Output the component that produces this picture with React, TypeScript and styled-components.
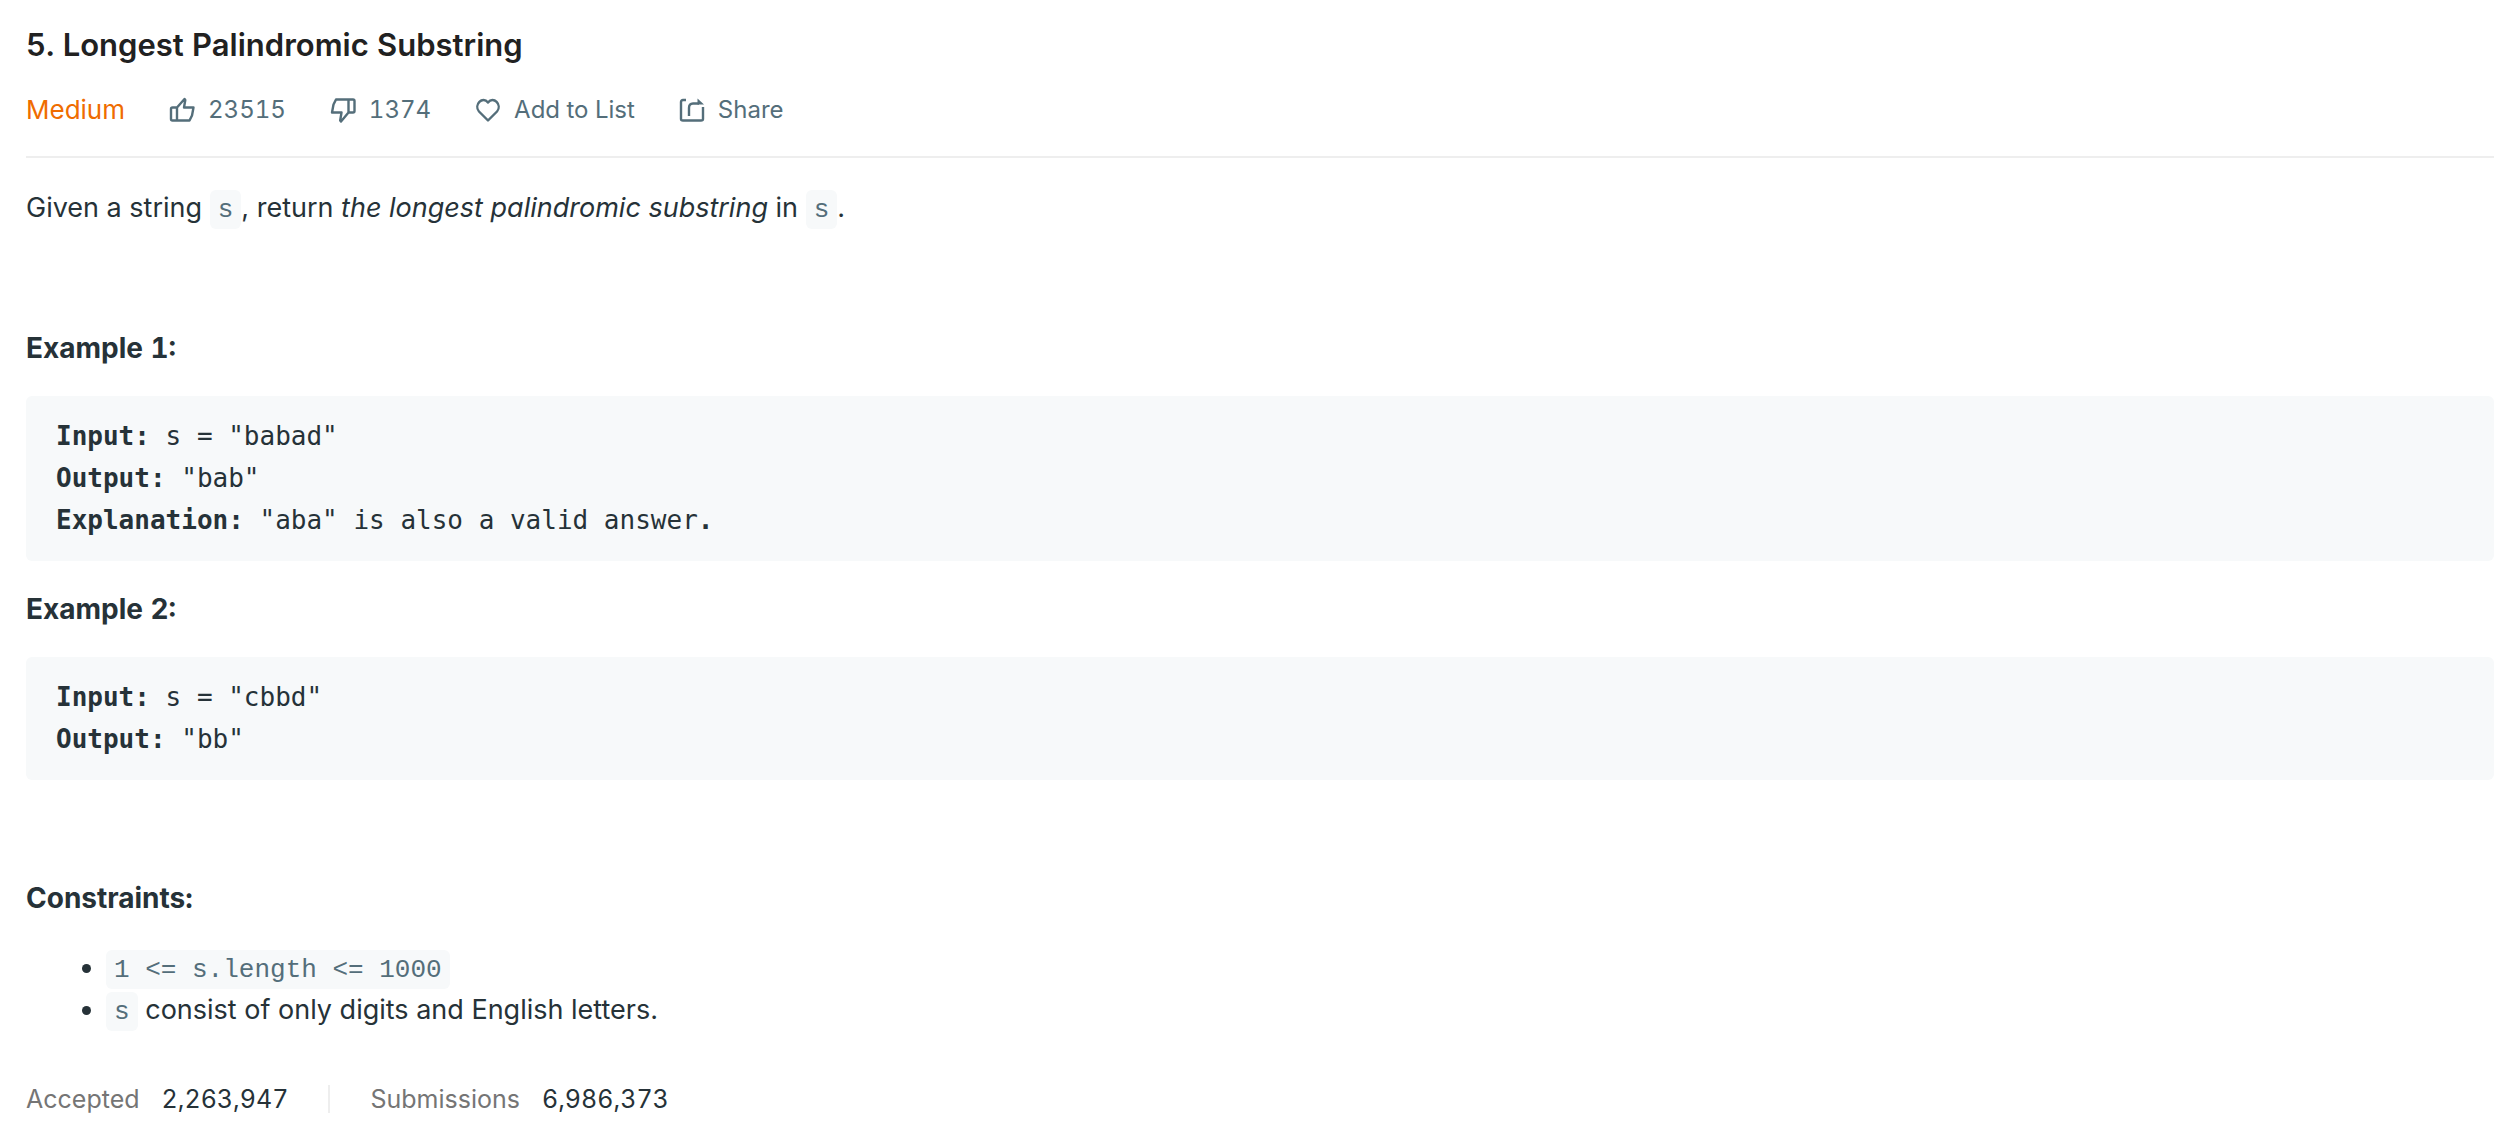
import React from "react";
import styled, { createGlobalStyle } from "styled-components";

const GlobalStyle = createGlobalStyle`
  * { box-sizing: border-box; }
  body {
    margin: 0;
    background: #fff;
    color: #263238;
    font-family: Inter, "Liberation Sans", sans-serif;
    font-size: 27px;
    line-height: 42px;
  }
`;

const Page = styled.main`
  padding: 21px 18px 20px 26px;
`;

const Header = styled.header`
  display: flex;
  flex-direction: column;
  gap: 20px;
  padding-bottom: 25px;
  border-bottom: 2px solid #eee;
`;

const Title = styled.h1`
  margin: 0;
  color: #212121;
  font-size: 31px;
  font-weight: 600;
  font-variant-numeric: tabular-nums;
  line-height: 48px;
`;

const Toolbar = styled.div`
  display: flex;
  align-items: center;
  gap: 44px;
  font-size: 24px;
  line-height: 42px;
`;

const Difficulty = styled.span`
  color: #ef6c00;
  font-size: 26px;
`;

const Action = styled.button`
  display: flex;
  align-items: center;
  gap: 13px;
  padding: 0;
  border: 0;
  background: none;
  color: #546e7a;
  font: inherit;
  font-variant-numeric: tabular-nums;
  cursor: pointer;
`;

const Icon = styled.svg`
  display: block;
  width: 26px;
  height: 26px;
  fill: none;
  stroke: currentColor;
  stroke-width: 2.4;
  stroke-linejoin: round;
`;

const Content = styled.article`
  padding-top: 29px;
`;

const Paragraph = styled.p<{ $spaced?: boolean }>`
  margin: 0 0 ${(p) => (p.$spaced ? 98 : 28)}px;
`;

const Heading = styled.h2`
  margin: 0;
  font-size: 28px;
  font-weight: 700;
  font-variant-numeric: tabular-nums;
`;

const Code = styled.code`
  padding: 5px 8px 4px;
  border-radius: 6px;
  background: #f7f9fa;
  color: #546e7a;
  font-family: "Liberation Mono", monospace;
  font-size: 26px;
  line-height: 1;
`;

const Block = styled.pre<{ $last?: boolean }>`
  margin: 27px 0 ${(p) => (p.$last ? 97 : 27)}px;
  padding: 19px 30px 20px;
  border-radius: 6px;
  background: #f7f9fa;
  font-family: "DejaVu Sans Mono", monospace;
  font-size: 26px;
  white-space: pre-wrap;
`;

const List = styled.ul`
  margin: 28px 0 0;
  padding-left: 80px;
`;

const Stats = styled.footer`
  display: flex;
  align-items: center;
  padding-top: 47px;
  font-size: 25px;
`;

const Stat = styled.div`
  display: flex;
  gap: 22px;

  & + & {
    margin-left: 40px;
    padding-left: 40px;
    border-left: 2px solid #eee;
    line-height: 28px;
  }
`;

const StatLabel = styled.span`
  color: #757575;
`;

const StatValue = styled.span`
  font-variant-numeric: tabular-nums;
`;

const ThumbUp = () => (
  <Icon viewBox="0 0 26 26" aria-hidden="true">
    <path d="M8 10.500V23.500M8 10.500l7.500-8.500.8 1-1.300 7.500h9.500l-1.500 8-2.500 5H3.500q-1.500 0-1.500-1.500v-10q0-1.500 1.500-1.500z" />
  </Icon>
);

const ThumbDown = () => (
  <Icon viewBox="0 0 26 26" aria-hidden="true">
    <path d="M18.500 15.500V2.500M18.500 15.500l-7.500 9-.8-1 1.300-8H2l1.500-8 2.500-5h17q1.500 0 1.500 1.500v10q0 1.500-1.500 1.500z" />
  </Icon>
);

const Heart = () => (
  <Icon viewBox="0 0 26 26" aria-hidden="true">
    <path d="M13 23.500 4 14.500C-1.500 8 7.500-1.500 13 5.500c5.500-7 14.500 2.500 9 9z" />
  </Icon>
);

const Share = () => (
  <Icon viewBox="0 0 26 26" aria-hidden="true">
    <path d="M7 3H4Q2 3 2 5v17q0 1.500 2 1.500h18q2 0 2-1.500V10M10 19v-8q0-4.500 4-4.500h6" />
    <path d="m18.500 1.500 6.500 6h-6.500z" fill="currentColor" stroke="none" />
  </Icon>
);

export default function App() {
  return (
    <>
      <GlobalStyle />
      <Page>
        <Header>
          <Title>5. Longest Palindromic Substring</Title>
          <Toolbar>
            <Difficulty>Medium</Difficulty>
            <Action type="button"><ThumbUp />23515</Action>
            <Action type="button"><ThumbDown />1374</Action>
            <Action type="button"><Heart />Add to List</Action>
            <Action type="button"><Share />Share</Action>
          </Toolbar>
        </Header>
        <Content>
          <Paragraph $spaced>
            Given a string <Code>s</Code>, return <em>the longest palindromic substring</em> in <Code>s</Code>.
          </Paragraph>
          <Heading>Example 1:</Heading>
          <Block>
            <strong>Input:</strong>{' s = "babad"\n'}
            <strong>Output:</strong>{' "bab"\n'}
            <strong>Explanation:</strong>{' "aba" is also a valid answer'}<strong>.</strong>
          </Block>
          <Heading>Example 2:</Heading>
          <Block $last>
            <strong>Input:</strong>{' s = "cbbd"\n'}
            <strong>Output:</strong>{' "bb"'}
          </Block>
          <Heading>Constraints:</Heading>
          <List>
            <li><Code>1 &lt;= s.length &lt;= 1000</Code></li>
            <li><Code>s</Code> consist of only digits and English letters.</li>
          </List>
        </Content>
        <Stats>
          <Stat><StatLabel>Accepted</StatLabel><StatValue>2,263,947</StatValue></Stat>
          <Stat><StatLabel>Submissions</StatLabel><StatValue>6,986,373</StatValue></Stat>
        </Stats>
      </Page>
    </>
  );
}
